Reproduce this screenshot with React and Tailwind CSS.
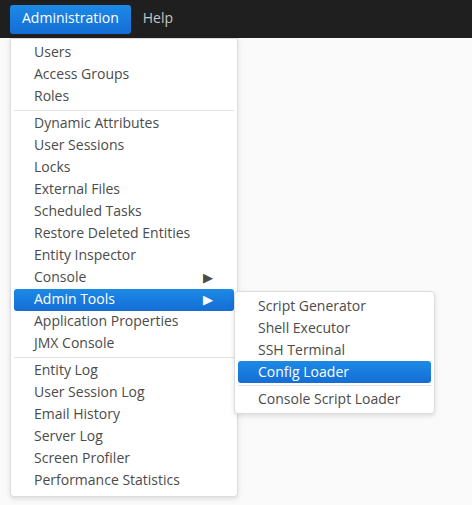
import React from 'react';

const groups = [
  ['Users', 'Access Groups', 'Roles'],
  [
    'Dynamic Attributes',
    'User Sessions',
    'Locks',
    'External Files',
    'Scheduled Tasks',
    'Restore Deleted Entities',
    'Entity Inspector',
    'Console',
    'Admin Tools',
    'Application Properties',
    'JMX Console',
  ],
  ['Entity Log', 'User Session Log', 'Email History', 'Server Log', 'Screen Profiler', 'Performance Statistics'],
];

const withArrow = ['Console', 'Admin Tools'];

const subGroups = [
  ['Script Generator', 'Shell Executor', 'SSH Terminal', 'Config Loader'],
  ['Console Script Loader'],
];

const MenuItem = ({ label, active, arrow, sub }) => (
  <div
    className={
      'mx-[3px] h-[22px] flex items-center justify-between pl-5 pr-[21px] rounded-[3px] ' +
      (sub ? 'pb-[1px] ' : 'pb-[3px] ') +
      (active ? 'bg-gradient-to-b from-[#1c8ae6] to-[#166dd5] text-white' : 'text-[#4b4b4b]')
    }
  >
    <span>{label}</span>
    {arrow && <span className="text-[13px] leading-none pt-[2px]">▶</span>}
  </div>
);

const Separator = () => <div className="mx-[3px] my-[2px] h-px bg-[#e3e3e3]" />;

const App = () => {
  return (
    <div
      className="relative w-[472px] h-[505px] bg-[#fafafa] overflow-hidden text-[14px]"
      style={{ fontFamily: '"Open Sans", sans-serif' }}
    >
      <div className="h-[38px] bg-[#1f1f1f] flex items-center pl-[10px] gap-3">
        <div className="h-[29px] px-3 pb-[3px] flex items-center rounded-[3px] bg-gradient-to-b from-[#1c8ae6] to-[#166dd5] text-white">
          Administration
        </div>
        <div className="text-[#c5c5c5] pb-[3px]">Help</div>
      </div>

      {/* main dropdown */}
      <div className="absolute left-[10px] top-[38px] w-[228px] bg-white border border-[#dcdcdc] rounded-b-[4px] pt-[3px] pb-[4px] shadow-[0_2px_5px_rgba(0,0,0,0.12)]">
        {groups.map((items, i) => (
          <div key={i}>
            {i > 0 && <Separator />}
            {items.map((label) => (
              <MenuItem key={label} label={label} active={label === 'Admin Tools'} arrow={withArrow.includes(label)} />
            ))}
          </div>
        ))}
      </div>

      {/* Admin Tools submenu */}
      <div className="absolute left-[234px] top-[291px] w-[201px] bg-white border border-[#dcdcdc] rounded-[4px] py-[3px] shadow-[0_2px_5px_rgba(0,0,0,0.12)]">
        {subGroups.map((items, i) => (
          <div key={i}>
            {i > 0 && <Separator />}
            {items.map((label) => (
              <MenuItem key={label} label={label} sub active={label === 'Config Loader'} />
            ))}
          </div>
        ))}
      </div>
    </div>
  );
};

export default App;
